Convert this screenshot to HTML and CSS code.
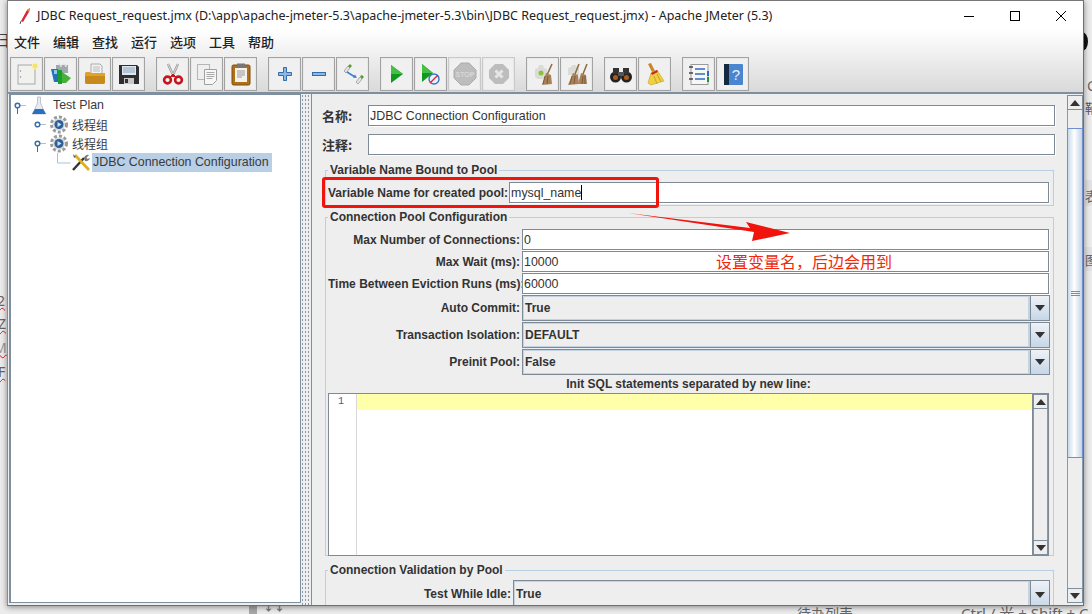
FILE: index.html
```html
<!DOCTYPE html>
<html lang="zh">
<head>
<meta charset="utf-8">
<title>Apache JMeter</title>
<link rel="stylesheet" href="styles.css">
</head>
<body>
<div class="desktop">
  <div class="frag frag-l1">扫</div>
  <div class="frag frag-l2 squiggle">2</div>
  <div class="frag frag-l3 squiggle">Z</div>
  <div class="frag frag-l4 squiggle">M</div>
  <div class="frag frag-l5 squiggle">F</div>
  <div class="blob"></div>
  <div class="frag frag-r1">C</div>
  <div class="frag frag-r2">鞘</div>
  <div class="band band-1"></div>
  <div class="band band-2"></div>
  <div class="frag frag-r3">表</div>
  <div class="frag frag-r4">图</div>
  <div class="tab-block"></div>
  <div class="frag frag-b0">↓↓</div>
  <div class="frag frag-b1">待办列表</div>
  <div class="frag frag-b2">Ctrl / 光 + Shift + C</div>
  <section class="window">
    <header class="titlebar">
      <svg class="app-icon" width="16" height="18" viewBox="0 0 16 18"><path d="M3 14 L9 3 L12 1 L11 5 L5 15 Z" fill="#d8283c"/><path d="M9 3 L12 1 L11 5Z" fill="#f08a3c"/><path d="M3 14 L2 17" stroke="#555" stroke-width="1"/></svg>
      <span class="title-text">JDBC Request_request.jmx (D:\app\apache-jmeter-5.3\apache-jmeter-5.3\bin\JDBC Request_request.jmx) - Apache JMeter (5.3)</span>
      <div class="win-controls">
        <svg width="46" height="30" viewBox="0 0 46 30"><path d="M18 15.500H28" stroke="#000"/></svg>
        <svg width="46" height="30" viewBox="0 0 46 30"><rect x="18.500" y="10.500" width="9" height="9" fill="none" stroke="#000"/></svg>
        <svg width="46" height="30" viewBox="0 0 46 30"><path d="M18 10L28 20M28 10L18 20" stroke="#000"/></svg>
      </div>
    </header>
    <div class="chrome">
      <nav class="menubar">
        <span>文件</span><span>编辑</span><span>查找</span><span>运行</span><span>选项</span><span>工具</span><span>帮助</span>
      </nav>
      <div class="toolbar">
        <div class="tool-group">
          <button class="tool"><svg width="24" height="24" viewBox="0 0 24 24"><rect x="3" y="3" width="17" height="19" fill="#f1f1ee" stroke="#a8a8a8"/><circle cx="5.500" cy="9" r=".7" fill="#888"/><circle cx="5.500" cy="15" r=".7" fill="#888"/><circle cx="20" cy="4" r="3" fill="#f5e36a" stroke="#f9f3b8"/></svg></button>
          <button class="tool"><svg width="24" height="24" viewBox="0 0 24 24"><path d="M7 3h12v8H7z" fill="#9fa8ad"/><path d="M9 2c2 0 3 1 3 3M14 2c2 0 3 1 3 3" stroke="#dfe3e5" fill="none" stroke-width="1.500"/><path d="M2 7h7v13H5z" fill="#2472b8"/><path d="M9 8h4v14H9z" fill="#17a02c"/><path d="M13 10l9 6-5 5h-4z" fill="#46b03a"/><path d="M5 8h3v4H5z" fill="#94c5ea"/></svg></button>
          <button class="tool"><svg width="24" height="24" viewBox="0 0 24 24"><path d="M8 2h9l2 2v9H8z" fill="#f3f3f3" stroke="#aaa"/><path d="M10 5h7M10 7h7M10 9h7" stroke="#bbb"/><path d="M3 10h4l1 1h14v9a2 2 0 0 1-2 2H4a2 2 0 0 1-2-2v-9z" fill="#e0a22c"/><path d="M2 14h20v6a2 2 0 0 1-2 2H4a2 2 0 0 1-2-2z" fill="#c98a1c"/></svg></button>
          <button class="tool"><svg width="24" height="24" viewBox="0 0 24 24"><path d="M2 3h18l2 2v17H2z" fill="#2e2e30"/><rect x="5" y="4" width="14" height="9" fill="#dfe6ee"/><path d="M6 6h12M6 8h12M6 10h12" stroke="#8aa4bf"/><rect x="7" y="16" width="10" height="6" fill="#c8c8c8"/><rect x="8" y="17" width="3" height="4" fill="#333"/></svg></button>
        </div>
        <div class="tool-group">
          <button class="tool"><svg width="24" height="24" viewBox="0 0 24 24"><path d="M7 2l5 11M17 2l-5 11" stroke="#9a9a9a" stroke-width="2.400" fill="none"/><path d="M7 2l5 11M17 2l-5 11" stroke="#e8e8e8" stroke-width=".8" fill="none"/><circle cx="6.500" cy="18" r="3.400" fill="none" stroke="#c4161c" stroke-width="2.600"/><circle cx="17.500" cy="18" r="3.400" fill="none" stroke="#c4161c" stroke-width="2.600"/><path d="M9 15l3-3 3 3" fill="#c4161c" stroke="#c4161c"/></svg></button>
          <button class="tool"><svg width="24" height="24" viewBox="0 0 24 24"><rect x="2.500" y="2.500" width="12" height="15" fill="#efefef" stroke="#b5b5b5"/><path d="M9.500 7.500h12v11l-4 4h-8z" fill="#f7f7f7" stroke="#a0a0a0"/><path d="M11.500 10.500h8M11.500 12.500h8M11.500 14.500h8M11.500 16.500h6" stroke="#aaa"/></svg></button>
          <button class="tool"><svg width="24" height="24" viewBox="0 0 24 24"><rect x="3" y="3" width="18" height="20" rx="1.500" fill="#b0701a" stroke="#7d4c10"/><rect x="6" y="6" width="12" height="14" fill="#f4f2ea"/><rect x="8" y="1.500" width="8" height="4" fill="#777"/><path d="M8 9h8M8 11h8M8 13h8M8 15h5" stroke="#999"/></svg></button>
        </div>
        <div class="tool-group">
          <button class="tool"><svg width="24" height="24" viewBox="0 0 24 24"><path d="M10.500 5.500h3v5h5v3h-5v5h-3v-5h-5v-3h5z" fill="#8fb7df" stroke="#2f6cb0"/></svg></button>
          <button class="tool"><svg width="24" height="24" viewBox="0 0 24 24"><rect x="5.500" y="10.500" width="13" height="3" fill="#8fb7df" stroke="#2f6cb0"/></svg></button>
          <button class="tool"><svg width="24" height="24" viewBox="0 0 24 24"><path d="M3 9l4-5 2 2-4 5z" fill="#e4e4e4" stroke="#aaa"/><path d="M7 4l2-2 2 2-2 2z" fill="#5a9a3a"/><path d="M15 20l4-5 2 2-4 5z" fill="#e4e4e4" stroke="#aaa"/><path d="M19 14l2-1 2 2-2 2z" fill="#5a9a3a"/><path d="M6 10l8 5" stroke="#3a7fd0" stroke-width="1.500"/><path d="M16 16l-4-.5 2-3z" fill="#3a7fd0"/></svg></button>
        </div>
        <div class="tool-group">
          <button class="tool"><svg width="24" height="24" viewBox="0 0 24 24"><path d="M6 3l12 9-12 9z" fill="#0f9a1f"/><path d="M6 3l12 9H6z" fill="#49bd45"/></svg></button>
          <button class="tool"><svg width="24" height="24" viewBox="0 0 24 24"><path d="M3 2l11 9-11 9z" fill="#0f9a1f"/><path d="M3 2l11 9H3z" fill="#49bd45"/><circle cx="15" cy="17" r="5" fill="#eaf2fb" stroke="#3a72c4" stroke-width="1.400"/><path d="M11 21l8-8" stroke="#d5263a" stroke-width="1.300"/></svg></button>
          <button class="tool off"><svg width="24" height="24" viewBox="0 0 24 24"><path d="M8 1h8l7 7v8l-7 7H8l-7-7V8z" fill="#bdbdbd" stroke="#adadad"/><text x="12" y="15" class="stop-text">STOP</text></svg></button>
          <button class="tool off"><svg width="24" height="24" viewBox="0 0 24 24"><path d="M8 2h8l6 6v8l-6 6H8l-6-6V8z" fill="#bdbdbd"/><path d="M8.500 8.500l7 7M15.500 8.500l-7 7" stroke="#e6e6e6" stroke-width="3"/></svg></button>
        </div>
        <div class="tool-group">
          <button class="tool"><svg width="24" height="24" viewBox="0 0 24 24"><path d="M4 7l3-1 1-3h4l1 3 3 1v8l-3 2H7l-3-2z" fill="#dcdcd6"/><circle cx="10" cy="11" r="2.500" fill="#8cbf45"/><path d="M21 2l-5 11" stroke="#8a6a40" stroke-width="1.500"/><path d="M15 11l5 2 1 9-10 1z" fill="#a9825a"/><path d="M14 14l-2 8M17 14l-1 8" stroke="#7a5a38"/></svg></button>
          <button class="tool"><svg width="24" height="24" viewBox="0 0 24 24"><path d="M3 6l3-1 1-2h4l1 2 2 1v7H3z" fill="#dcdcd6"/><path d="M14 2l-4 10M22 2l-4 10" stroke="#8a6a40" stroke-width="1.500"/><path d="M8 11l5 2 1 9-11 1z" fill="#a9825a"/><path d="M16 11l5 2 1 9-9 0z" fill="#a9825a"/><path d="M7 14l-2 8M10 14l-1 8M18 14l-1 8M20 14l0 8" stroke="#7a5a38"/></svg></button>
        </div>
        <div class="tool-group">
          <button class="tool"><svg width="24" height="24" viewBox="0 0 24 24"><circle cx="6.500" cy="15" r="5.500" fill="#222"/><circle cx="17.500" cy="15" r="5.500" fill="#222"/><rect x="4" y="6" width="6" height="6" fill="#333"/><rect x="14" y="6" width="6" height="6" fill="#333"/><rect x="9" y="10" width="6" height="4" fill="#555"/><circle cx="6.500" cy="15.500" r="2.500" fill="#a85c20"/><circle cx="17.500" cy="15.500" r="2.500" fill="#a85c20"/></svg></button>
          <button class="tool"><svg width="24" height="24" viewBox="0 0 24 24"><path d="M5 2l3-1 4 8-3 1z" fill="#c8862a"/><path d="M8 11l6-3 7 11-13 4-3-2z" fill="#f0d040" stroke="#c8a424" stroke-width=".6"/><path d="M8 11l6-3 1 2-6 3z" fill="#c92a2a"/><path d="M11 14l3 8M14 12l4 8" stroke="#c8a424"/></svg></button>
        </div>
        <div class="tool-group">
          <button class="tool"><svg width="24" height="24" viewBox="0 0 24 24"><rect x="4" y="2.500" width="17" height="20" fill="#f7f7f7" stroke="#999"/><path d="M8 7h10M8 12h10M8 17h10" stroke="#2f6cc0" stroke-width="1.400"/><path d="M2 5h4M2 11h4M2 17h4" stroke="#444" stroke-width="1.500"/><rect x="20" y="9" width="2" height="5" fill="#2f6cc0"/><rect x="20" y="15" width="2" height="5" fill="#1a9a2a"/></svg></button>
          <button class="tool"><svg width="24" height="24" viewBox="0 0 24 24"><rect x="3" y="2" width="19" height="21" rx="1" fill="#4a86d0"/><rect x="3" y="2" width="5" height="21" fill="#14283f"/><text x="15" y="18" class="help-text">?</text></svg></button>
        </div>
      </div>
    </div>
    <main class="main">
      <aside class="tree">
        <div class="tree-row"><svg class="handle" width="16" height="19" viewBox="0 0 16 19"><path d="M9 9.500h6" stroke="#a9c2da"/><path d="M6.500 12v6" stroke="#3a6ea5"/><circle cx="6.500" cy="9.500" r="2.300" fill="#fff" stroke="#3a6ea5" stroke-width="1.500"/></svg><svg class="node-icon flask" width="20" height="19" viewBox="0 0 20 19"><path d="M10.500 1h3v6l5 11h-13l5-11z" fill="#e8ecf2" stroke="#a8b0bc" stroke-width=".7"/><path d="M8 13h8l3 5H5z" fill="#2a6fc0"/></svg><span class="node-label">Test Plan</span></div>
        <div class="tree-row indent1"><svg class="handle" width="16" height="19" viewBox="0 0 16 19"><path d="M9 9.500h6" stroke="#a9c2da"/><circle cx="6.500" cy="9.500" r="2.300" fill="#fff" stroke="#3a6ea5" stroke-width="1.500"/></svg><svg class="node-icon gear" width="22" height="19" viewBox="0 0 22 19"><circle cx="12" cy="9.500" r="7.500" fill="none" stroke="#9a9a9a" stroke-width="3" stroke-dasharray="3 2"/><circle cx="12" cy="9.500" r="6" fill="#d8d8d8"/><circle cx="12" cy="9.500" r="4.500" fill="#2c5f9a"/><path d="M10.500 7l4 2.500-4 2.500z" fill="#cfe0f2"/></svg><span class="node-label cjk">线程组</span></div>
        <div class="tree-row indent1"><svg class="handle" width="16" height="19" viewBox="0 0 16 19"><path d="M9 9.500h6" stroke="#a9c2da"/><path d="M6.500 12v6" stroke="#3a6ea5"/><circle cx="6.500" cy="9.500" r="2.300" fill="#fff" stroke="#3a6ea5" stroke-width="1.500"/></svg><svg class="node-icon gear" width="22" height="19" viewBox="0 0 22 19"><circle cx="12" cy="9.500" r="7.500" fill="none" stroke="#9a9a9a" stroke-width="3" stroke-dasharray="3 2"/><circle cx="12" cy="9.500" r="6" fill="#d8d8d8"/><circle cx="12" cy="9.500" r="4.500" fill="#2c5f9a"/><path d="M10.500 7l4 2.500-4 2.500z" fill="#cfe0f2"/></svg><span class="node-label cjk">线程组</span></div>
        <div class="tree-row indent2"><svg class="handle" width="16" height="19" viewBox="0 0 16 19"><path d="M1.500 0v10h13" stroke="#a9c2da" fill="none"/></svg><svg class="node-icon wrench" width="18" height="19" viewBox="0 0 18 19"><path d="M1 17l11-12" stroke="#333" stroke-width="2.400"/><path d="M12 5a4 4 0 0 1 5-3l-2.500 2.500 1 1.500 2.500-1a4 4 0 0 1-5 3z" fill="#777"/><path d="M3 2l14 15" stroke="#e0b020" stroke-width="2.800"/><path d="M1 1l3 3-2 1z" fill="#666"/></svg><span class="node-label selected">JDBC Connection Configuration</span></div>
      </aside>
      <div class="divider"></div>
      <div class="panel">
        <div class="form">
          <div class="name-row"><label class="cjk-label">名称:</label><div class="field">JDBC Connection Configuration</div></div>
          <div class="name-row"><label class="cjk-label">注释:</label><div class="field"></div></div>
          <fieldset class="group group-var">
            <legend>Variable Name Bound to Pool</legend>
            <div class="row-var"><label>Variable Name for created pool:</label><div class="field">mysql_name<i class="caret"></i></div></div>
          </fieldset>
          <fieldset class="group group-pool">
            <legend>Connection Pool Configuration</legend>
            <div class="pool-grid">
              <label>Max Number of Connections:</label><div class="field">0</div>
              <label>Max Wait (ms):</label><div class="field">10000</div>
              <label>Time Between Eviction Runs (ms):</label><div class="field">60000</div>
              <label>Auto Commit:</label><div class="combo"><span>True</span><b class="combo-btn"><i class="tri-down"></i></b></div>
              <label>Transaction Isolation:</label><div class="combo"><span>DEFAULT</span><b class="combo-btn"><i class="tri-down"></i></b></div>
              <label>Preinit Pool:</label><div class="combo"><span>False</span><b class="combo-btn"><i class="tri-down"></i></b></div>
            </div>
            <div class="init-label">Init SQL statements separated by new line:</div>
            <div class="editor">
              <div class="gutter">1</div>
              <div class="code"><div class="active-line"></div></div>
              <div class="vscroll small">
                <b class="sb-btn"><i class="tri-up"></i></b>
                <div class="sb-track"></div>
                <b class="sb-btn"><i class="tri-down"></i></b>
              </div>
            </div>
          </fieldset>
          <fieldset class="group group-valid">
            <legend>Connection Validation by Pool</legend>
            <div class="valid-grid">
              <label>Test While Idle:</label><div class="combo"><span>True</span><b class="combo-btn"><i class="tri-down"></i></b></div>
            </div>
          </fieldset>
        </div>
      </div>
      <div class="vscroll main-scroll">
        <b class="sb-btn"><i class="tri-up"></i></b>
        <div class="sb-track"><div class="sb-thumb"><i class="grip"></i></div></div>
        <b class="sb-btn"><i class="tri-down"></i></b>
      </div>
    </main>
  </section>
  <div class="note-box"></div>
  <svg class="note-arrow" width="170" height="34" viewBox="0 0 170 34"><path d="M0 1L122 16L118 10L162 21L124 29L126 20Z" fill="#f0140c"/></svg>
  <div class="note-text">设置变量名&#xFF0C;后边会用到</div>
</div>
</body>
</html>
```
FILE: styles.css
```css
* { box-sizing: border-box; }
html, body { margin: 0; padding: 0; }
body { font-family: "Liberation Sans", Arial, sans-serif; }
.desktop { position: relative; width: 1092px; height: 614px; overflow: hidden; background: #ececec; }
.frag { position: absolute; font-family: "Noto Sans", "Noto Sans CJK SC", sans-serif; color: #666; white-space: nowrap; }
.squiggle { text-decoration: underline wavy #e8101c; text-decoration-thickness: 1px; }
.frag-l1 { left: -7px; top: 27px; font-size: 16px; color: #444; font-family: "Noto Sans CJK SC", sans-serif; }
.frag-l2 { left: -3px; top: 291px; font-size: 14px; }
.frag-l3 { left: -2px; top: 314px; font-size: 14px; }
.frag-l4 { left: -6px; top: 338px; font-size: 14px; color: #999; }
.frag-l5 { left: -2px; top: 362px; font-size: 14px; }
.blob { position: absolute; left: 1076px; top: 32px; width: 12px; height: 19px; border-radius: 50%; background: #111; }
.frag-r1 { left: 1087px; top: 76px; font-size: 14px; }
.frag-r2 { left: 1085px; top: 98px; font-size: 13px; color: #555; font-family: "Noto Sans CJK SC", sans-serif; }
.band { position: absolute; left: 1085px; width: 7px; background: #e2e2e4; }
.band-1 { top: 180px; height: 26px; }
.band-2 { top: 247px; height: 24px; }
.frag-r3 { left: 1085px; top: 186px; font-size: 13px; font-family: "Noto Sans CJK SC", sans-serif; }
.frag-r4 { left: 1085px; top: 250px; font-size: 13px; font-family: "Noto Sans CJK SC", sans-serif; }
.tab-block { position: absolute; left: 249px; top: 606px; width: 8px; height: 8px; background: #a8a8a8; }
.frag-b0 { left: 263px; top: 600px; font-size: 11px; font-weight: 700; line-height: 14px; color: #777; }
.frag-b1 { left: 797px; top: 603px; font-size: 14px; font-family: "Noto Sans CJK SC", sans-serif; }
.frag-b2 { left: 961px; top: 602px; font-size: 15px; }

.window { position: absolute; left: 7px; top: 0; width: 1077px; height: 606px; display: flex; flex-direction: column; background: #eee; border-right: 1px solid #6f6f6f; border-bottom: 1px solid #6f6f6f; border-left: 1px solid #8a8a8a; border-top: 1px solid #777; box-shadow: 0 1px 6px rgba(0,0,0,.45); }
.titlebar { height: 29px; flex: none; display: flex; align-items: center; background: #fff; padding-left: 10px; }
.app-icon { margin-right: 3px; }
.title-text { font-family: "Noto Sans", sans-serif; font-size: 12.5px; color: #222; white-space: nowrap; }
.win-controls { margin-left: auto; display: flex; margin-right: -1px; }
.win-controls svg { display: block; }

.chrome { flex: none; height: 64px; background: linear-gradient(#fff, #f3f3f3 30%, #d9d9d9); border-bottom: 2px solid #7e8fa0; }
.menubar { height: 24px; display: flex; align-items: center; gap: 13px; padding: 0 0 2px 6px; font-family: "Noto Sans CJK SC", sans-serif; font-size: 13px; font-weight: 500; color: #222; }
.toolbar { display: flex; gap: 11px; padding: 3px 0 0 2px; }
.tool-group { display: flex; gap: 1px; }
.tool { width: 33px; height: 34px; padding: 0; margin: 0; border: 1px solid #a2a2a2; outline: 1px solid #e9e9e9; outline-offset: -2px; background: #f0f0f0; display: flex; align-items: center; justify-content: center; }
.tool.off { border-color: #c9c9c9; }
.tool svg { display: block; }
.stop-text { font: bold 7px "Liberation Sans", sans-serif; fill: #d8d8d8; text-anchor: middle; }
.help-text { font: 15px "Liberation Sans", sans-serif; fill: #e8f0fa; text-anchor: middle; }

.main { flex: 1; min-height: 0; display: flex; background: #eee; }
.tree { width: 292px; margin: 0 0 2px 1px; background: #fff; border: 1px solid #7e8fa0; border-left-width: 2px; padding-top: 1px; }
.tree-row { height: 19px; display: flex; align-items: center; white-space: nowrap; }
.indent1 { padding-left: 20px; }
.indent2 { padding-left: 45px; }
.handle { flex: none; }
.node-icon { flex: none; }
.flask { margin-right: 4px; }
.gear { margin-right: 1px; }
.wrench { margin-right: 2px; }
.node-label { font-size: 12.4px; color: #3a3a3a; line-height: 19px; padding: 0 2px; }
.node-label.cjk { font-family: "Noto Sans CJK SC", sans-serif; font-size: 12px; }
.node-label.selected { background: #b8cfe5; padding: 0 3px 0 1px; }
.divider { width: 10px; flex: none; background-image: radial-gradient(#8c98a4 .6px, transparent .9px); background-size: 3px 4px; background-position: 3px 0; }
.panel { width: 755px; flex: none; height: 100%; border-left: 1px solid #7e8fa0; overflow: hidden; padding: 11px 0 0 10px; }
.form { display: flex; flex-direction: column; width: 733px; }
.name-row { display: flex; align-items: center; height: 21px; margin-bottom: 8px; }
.name-row label { width: 46px; flex: none; }
.cjk-label { font-family: "Noto Sans CJK SC", sans-serif; font-size: 13px; font-weight: 700; color: #333; }
.field { flex: 1; height: 21px; background: #fff; border: 1px solid #7e8a96; box-shadow: 1px 1px 0 #fff; font-size: 12.4px; line-height: 19px; padding: 1px 0 0 1px; color: #333; white-space: nowrap; }
label { font-size: 12px; font-weight: 700; color: #333; white-space: nowrap; }
.group { margin: 0 0 0 3px; padding: 0; border: 1px solid #b8cfe5; min-width: 0; width: 729px; }
.group legend { padding: 0 2px; margin-left: 0; font-size: 12px; font-weight: 700; color: #333; line-height: 14px; }
.group-var { height: 43px; padding: 5px 4px 0 2px; }
.row-var { display: flex; align-items: center; gap: 1px; }
.group-pool { height: 346px; margin-top: 4px; padding: 5px 4px 0 2px; }
.pool-grid { display: grid; grid-template-columns: 192px 1fr; column-gap: 2px; grid-template-rows: 21px 21px 21px 26px 26px 26px; row-gap: 1px; align-items: center; }
.pool-grid > label { text-align: right; }
.combo { height: 100%; display: flex; align-items: stretch; border: 1px solid #7e8a96; background: #eee; margin-right: -1px; font-size: 12px; font-weight: 700; color: #333; }
.combo > span { flex: 1; border: 1px solid #c4d3e2; border-right-width: 2px; line-height: 22px; padding-left: 1px; }
.combo-btn { width: 19px; flex: none; border-left: 1px solid #7e8a96; background: linear-gradient(#eef2f7, #c5d6e7); display: flex; align-items: center; justify-content: center; }
.tri-down { width: 0; height: 0; border: 5px solid transparent; border-top: 6px solid #333; border-bottom: 0; }
.tri-up { width: 0; height: 0; border: 5px solid transparent; border-bottom: 6px solid #333; border-top: 0; }
.init-label { height: 18px; text-align: center; font-size: 12px; font-weight: 700; color: #333; line-height: 18px; }
.editor { height: 163px; display: flex; background: #fff; border: 1px solid #7e8a96; }
.gutter { width: 28px; flex: none; border-right: 1px solid #d8d8d8; font: 10px "Liberation Mono", monospace; color: #7a3fa0; padding: 2px 0 0 9px; }
.code { flex: 1; }
.active-line { height: 16px; background: #ffffaa; }
.vscroll { display: flex; flex-direction: column; flex: none; }
.vscroll.small { width: 16px; border-left: 1px solid #7e8a96; }
.sb-btn { height: 15px; flex: none; display: flex; align-items: center; justify-content: center; background: #eee; border: 1px solid #7e8fa0; }
.sb-track { flex: 1; background: #eee; position: relative; border-left: 1px solid #8a9aac; border-right: 1px solid #8a9aac; }
.group-valid { height: 60px; margin-top: 7px; padding: 3px 4px 0 2px; }
.valid-grid { display: grid; grid-template-columns: 183px 1fr; column-gap: 2px; grid-template-rows: 30px; align-items: start; }
.valid-grid > label { padding-top: 7px; text-align: right; }
.valid-grid .combo { height: 30px; }
.valid-grid .combo > span { line-height: 24px; }
.main-scroll { width: 16px; margin-left: 1px; padding-top: 1px; padding-bottom: 2px; }
.sb-thumb { position: absolute; left: -1px; right: -1px; top: 18px; bottom: 130px; background: linear-gradient(90deg, #c9d9ea, #fff 45%, #c3d4e6); border: 1px solid #6f8fd0; display: flex; align-items: center; justify-content: center; }
.grip { width: 9px; height: 5px; background: repeating-linear-gradient(#6f8fc0 0 1px, transparent 1px 2px); }

.note-box { position: absolute; left: 322px; top: 177px; width: 337px; height: 31px; border: 3px solid #f0140c; border-radius: 3px; }
.note-arrow { position: absolute; left: 628px; top: 212px; }
.note-text { position: absolute; left: 716px; top: 252px; font-family: "Noto Sans CJK SC", sans-serif; font-size: 16px; line-height: 18px; color: #f0280c; white-space: nowrap; }
.caret { display: inline-block; width: 1px; height: 15px; background: #000; vertical-align: -3px; }
```
